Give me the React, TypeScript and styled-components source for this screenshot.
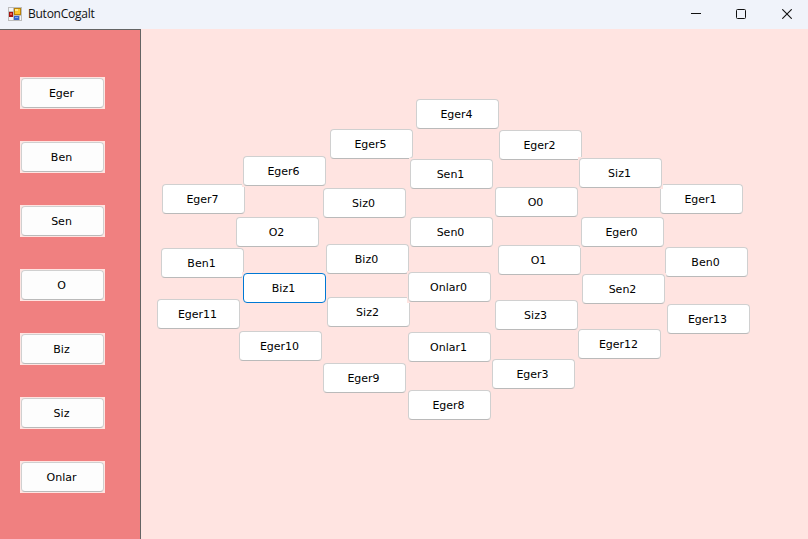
import React from "react";
import styled, { createGlobalStyle } from "styled-components";

const GlobalStyle = createGlobalStyle`
  html, body, #root { height: 100%; margin: 0; }
  body { overflow: hidden; }
`;

const Window = styled.div`
  display: flex;
  flex-direction: column;
  height: 100%;
  background: #ffe4e1;
`;

const TitleBar = styled.header`
  display: flex;
  align-items: center;
  flex: 0 0 29px;
  box-sizing: border-box;
  padding: 0 0 2px 8px;
  background: #f0f3fa;
`;

const Title = styled.h1`
  flex: 1;
  margin: 0 0 0 6px;
  font: 400 12px/16px "Open Sans", "Noto Sans", sans-serif;
  letter-spacing: -0.25px;
  color: #111;
`;

const WindowControl = styled.button`
  display: flex;
  align-items: center;
  justify-content: center;
  box-sizing: border-box;
  width: 46px;
  height: 27px;
  padding: 0;
  border: 0;
  background: transparent;

  &:first-child {
    padding-left: 2px;
  }
`;

const Controls = styled.div`
  display: flex;
  margin-right: -2px;
`;

const Body = styled.div`
  display: flex;
  flex: 1;
  min-height: 0;
`;

const Sidebar = styled.nav`
  display: flex;
  flex-direction: column;
  gap: 32px;
  flex: 0 0 141px;
  box-sizing: border-box;
  padding: 47px 0 0 20px;
  border-top: 1px solid #646464;
  border-right: 1px solid #646464;
  background: #f08080;
`;

const Canvas = styled.main`
  position: relative;
  flex: 1;
`;

const ButtonFrame = styled.div`
  display: flex;
  box-sizing: border-box;
  width: 85px;
  height: 32px;
  padding: 1px;
  background: #ffe4e1;
`;

const PushButton = styled.button<{ $focused?: boolean; $fill?: string }>`
  flex: 1;
  box-sizing: border-box;
  padding: 2px 2px 0 0;
  border: 1px solid ${(p) => (p.$focused ? "#0078d4" : "#d0d0d0")};
  border-bottom-color: ${(p) => (p.$focused ? "#0078d4" : "#bababa")};
  border-radius: 4px;
  background: ${(p) => p.$fill ?? "#fdfdfd"};
  color: #000;
  font: 11px/14px "DejaVu Sans", Verdana, sans-serif;
  text-align: center;
`;

const Placed = styled.div<{ $x: number; $y: number }>`
  position: absolute;
  left: ${(p) => p.$x - 142}px;
  top: ${(p) => p.$y - 30}px;
`;

const words = ["Eger", "Ben", "Sen", "O", "Biz", "Siz", "Onlar"];

// Window coordinates of each generated button, listed back to front.
const placed: [string, number, number][] = [
  ["Eger13", 667, 304],
  ["Eger12", 578, 329],
  ["Eger11", 157, 299],
  ["Eger10", 239, 331],
  ["Eger9", 323, 363],
  ["Eger8", 408, 390],
  ["Eger7", 162, 184],
  ["Eger6", 243, 156],
  ["Eger5", 330, 129],
  ["Eger4", 416, 99],
  ["Eger3", 492, 359],
  ["Eger2", 499, 130],
  ["Eger1", 660, 184],
  ["Siz3", 495, 300],
  ["Siz2", 327, 297],
  ["Siz1", 579, 158],
  ["Siz0", 323, 188],
  ["Ben1", 161, 248],
  ["Ben0", 665, 247],
  ["Biz0", 326, 244],
  ["Biz1", 243, 273],
  ["Onlar1", 408, 332],
  ["Onlar0", 408, 272],
  ["O2", 236, 217],
  ["O1", 498, 245],
  ["O0", 495, 187],
  ["Sen2", 582, 274],
  ["Sen1", 410, 159],
  ["Sen0", 410, 217],
  ["Eger0", 581, 217],
];

const FormIcon = () => (
  <svg width="14" height="14" viewBox="0 0 14 14" shapeRendering="crispEdges">
    <rect width="14" height="14" fill="#bcbcbc" />
    <rect x="1" y="1" width="4" height="3" fill="#f3f3f5" />
    <rect x="1" y="10" width="4" height="3" fill="#f3f3f5" />
    <rect x="12" y="9" width="1" height="4" fill="#f3f3f5" />
    <rect x="1" y="5" width="4" height="5" fill="#a31410" />
    <rect x="2" y="6" width="2" height="2" fill="#e8604c" />
    <rect x="6" y="1" width="7" height="7" fill="#b98209" />
    <rect x="7" y="2" width="5" height="5" fill="#fcc62c" />
    <rect x="7" y="2" width="3" height="2" fill="#ffe68c" />
    <rect x="6" y="9" width="5" height="4" fill="#3565cc" />
    <rect x="7" y="10" width="3" height="1" fill="#7ba7f4" />
  </svg>
);

export default function App() {
  return (
    <>
      <GlobalStyle />
      <Window>
        <TitleBar>
          <FormIcon />
          <Title>ButonCogalt</Title>
          <Controls>
            <WindowControl aria-label="Minimize">
              <svg width="10" height="11" shapeRendering="crispEdges">
                <path d="M0 5.5H10" stroke="#111" />
              </svg>
            </WindowControl>
            <WindowControl aria-label="Maximize">
              <svg width="10" height="10">
                <rect x=".5" y=".5" width="9" height="9" rx="1" fill="none" stroke="#111" />
              </svg>
            </WindowControl>
            <WindowControl aria-label="Close">
              <svg width="10" height="10">
                <path d="M.3 .3L9.7 9.7M9.7 .3L.3 9.7" stroke="#111" strokeWidth="1.1" />
              </svg>
            </WindowControl>
          </Controls>
        </TitleBar>
        <Body>
          <Sidebar>
            {words.map((w) => (
              <ButtonFrame key={w}>
                <PushButton>{w}</PushButton>
              </ButtonFrame>
            ))}
          </Sidebar>
          <Canvas>
            {placed.map(([label, x, y]) => (
              <Placed key={label} $x={x} $y={y}>
                <ButtonFrame>
                  <PushButton $fill="#fff" $focused={label === "Biz1"}>
                    {label}
                  </PushButton>
                </ButtonFrame>
              </Placed>
            ))}
          </Canvas>
        </Body>
      </Window>
    </>
  );
}
